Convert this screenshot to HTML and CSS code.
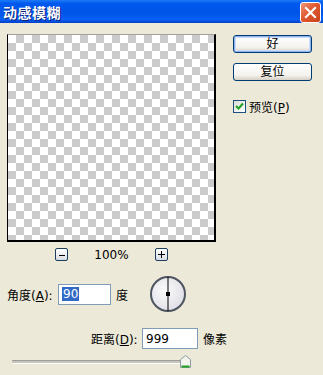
FILE: index.html
```html
<!DOCTYPE html>
<html lang="zh">
<head>
    <meta charset="UTF-8">
    <title>动感模糊</title>
    <link rel="stylesheet" href="styles.css">
</head>
<body>
    <div class="window">
        <div class="titlebar">
            <span class="title">动感模糊</span>
            <span class="close">
                <svg width="13" height="13" viewBox="0 0 13 13"><path d="M2 2 L11 11 M11 2 L2 11" stroke="#fff" stroke-width="2.2" stroke-linecap="square"/></svg>
            </span>
        </div>

        <div class="content">
            <div class="top">
                <div class="preview-col">
                    <div class="preview"></div>
                    <div class="zoom">
                        <span class="zbtn">
                            <svg width="6" height="6" viewBox="0 0 6 6"><path d="M0 3.5 H6" stroke="#000"/></svg>
                        </span>
                        <span class="pct">100%</span>
                        <span class="zbtn">
                            <svg width="7" height="7" viewBox="0 0 7 7"><path d="M0 3.5 H7 M3.5 0 V7" stroke="#000"/></svg>
                        </span>
                    </div>
                </div>

                <div class="side">
                    <span class="btn btn-default">好</span>
                    <span class="btn">复位</span>
                    <label class="check">
                        <span class="box">
                            <svg width="9" height="9" viewBox="0 0 9 9"><path d="M1 4 L3.5 6.5 L8 1.5" fill="none" stroke="#21a121" stroke-width="2"/></svg>
                        </span>
                        <span>预览(<u>P</u>)</span>
                    </label>
                </div>
            </div>

            <div class="angle-row">
                <span class="lbl">角度(<u>A</u>):</span>
                <span class="field field-angle"><span class="sel">90</span></span>
                <span class="unit">度</span>
                <svg class="dial" width="38" height="38" viewBox="0 0 38 38">
                    <defs>
                        <radialGradient id="dg" cx="0.4" cy="0.4" r="0.7">
                            <stop offset="0" stop-color="#fbfbfb"/>
                            <stop offset="1" stop-color="#dcdce4"/>
                        </radialGradient>
                    </defs>
                    <circle cx="19" cy="19" r="17" fill="url(#dg)" stroke="#4e5560" stroke-width="2"/>
                    <path d="M19 2 V36" stroke="#000" stroke-width="1"/>
                    <rect x="17" y="17" width="4" height="4" fill="#000"/>
                </svg>
            </div>

            <div class="dist-row">
                <span class="lbl">距离(<u>D</u>):</span>
                <span class="field field-dist">999</span>
                <span class="unit">像素</span>
            </div>

            <div class="slider">
                <div class="track"></div>
                <svg class="thumb" width="11" height="13" viewBox="0 0 11 13">
                    <path d="M0.5 4.5 L5.5 0.5 L10.5 4.5 V12.5 H0.5 Z" fill="#f4f3ee" stroke="#8c9aa6"/>
                    <path d="M1.5 11.5 H9.5" stroke="#21a121" stroke-width="2"/>
                </svg>
            </div>
        </div>
    </div>
</body>
</html>
```

FILE: styles.css
```css
body {
    margin: 0;
    background: #ece9d8;
    font-family: "DejaVu Sans", "Noto Sans CJK SC", sans-serif;
    font-size: 12px;
    color: #000;
}

.window {
    width: 323px;
    height: 375px;
    background: #ece9d8;
    overflow: hidden;
}

.titlebar {
    height: 23px;
    display: flex;
    align-items: center;
    justify-content: space-between;
    padding: 0 2px 0 3px;
    background: linear-gradient(#1d7cf7, #0058ee 15%, #0055e8 55%, #0a5ff4 85%, #003fc8);
}

.title {
    color: #fff;
    font-family: "Noto Sans CJK SC", sans-serif;
    font-weight: bold;
    font-size: 14px;
    letter-spacing: 0.5px;
    text-shadow: 1px 1px 0 #0a1f7a;
}

.close {
    width: 19px;
    height: 19px;
    margin-top: 1px;
    border: 1px solid #fff;
    border-radius: 3px;
    background: linear-gradient(135deg, #f0977a, #e0582f 45%, #c9421d);
    display: flex;
    align-items: center;
    justify-content: center;
}

.content {
    padding: 11px 0 0 7px;
}

.top {
    display: flex;
    gap: 17px;
}

.preview {
    width: 206px;
    height: 205px;
    border: 1px solid #000;
    border-top-color: #a0a0a0;
    border-width: 1px 2px 2px 1px;
    background-color: #fff;
    background-image: conic-gradient(#cbcbcb 25%, #fff 0 50%, #cbcbcb 0 75%, #fff 0);
    background-size: 16px 16px;
}

.zoom {
    display: flex;
    align-items: center;
    margin-top: 6px;
    padding-left: 48px;
    height: 13px;
}

.zbtn {
    width: 11px;
    height: 11px;
    border: 1px solid #1c3e5e;
    border-radius: 2px;
    background: linear-gradient(#fff, #d8dde4);
    display: flex;
    align-items: center;
    justify-content: center;
}

.pct {
    width: 87px;
    text-align: center;
    font-size: 12px;
}

.side {
    display: flex;
    flex-direction: column;
    gap: 10px;
    padding-top: 1px;
}

.btn {
    width: 77px;
    height: 16px;
    border: 1px solid #003c74;
    border-radius: 3px;
    background: linear-gradient(#fff, #f4f3ee 70%, #d6d0c5);
    text-align: center;
    line-height: 16px;
}

.btn-default {
    box-shadow: inset 0 0 0 1px #8eb3f0, inset 0 0 0 2px #cadcf8;
}

.check {
    display: flex;
    align-items: center;
    gap: 3px;
    margin-top: 7px;
}

.box {
    width: 11px;
    height: 11px;
    border: 1px solid #1c5180;
    background: linear-gradient(135deg, #dcdcd6, #fff);
    display: flex;
    align-items: center;
    justify-content: center;
}

.angle-row {
    display: flex;
    align-items: center;
    margin-top: 14px;
    height: 38px;
}

.lbl {
    white-space: nowrap;
}

.angle-row .lbl {
    width: 51px;
}

.field {
    border: 1px solid #7f9db9;
    background: #fff;
    display: flex;
    align-items: center;
    padding-left: 3px;
    box-sizing: border-box;
    font-size: 12px;
}

.field-angle {
    width: 53px;
    height: 21px;
}

.sel {
    background: #316ac5;
    color: #fff;
    padding: 0 1px;
}

.unit {
    margin-left: 5px;
}

.dial {
    margin-left: 21px;
}

.dist-row {
    display: flex;
    align-items: center;
    margin-top: 15px;
    padding-left: 84px;
}

.dist-row .lbl {
    width: 51px;
}

.field-dist {
    width: 56px;
    height: 21px;
}

.slider {
    position: relative;
    margin: 6px 0 0 5px;
    width: 176px;
    height: 13px;
}

.track {
    position: relative;
    top: 5px;
    height: 2px;
    border-top: 1px solid #9d9c99;
    border-bottom: 1px solid #fff;
    background: #c8c6bc;
    border-radius: 1px;
}

.thumb {
    position: absolute;
    left: 168px;
    top: 0;
}
```
